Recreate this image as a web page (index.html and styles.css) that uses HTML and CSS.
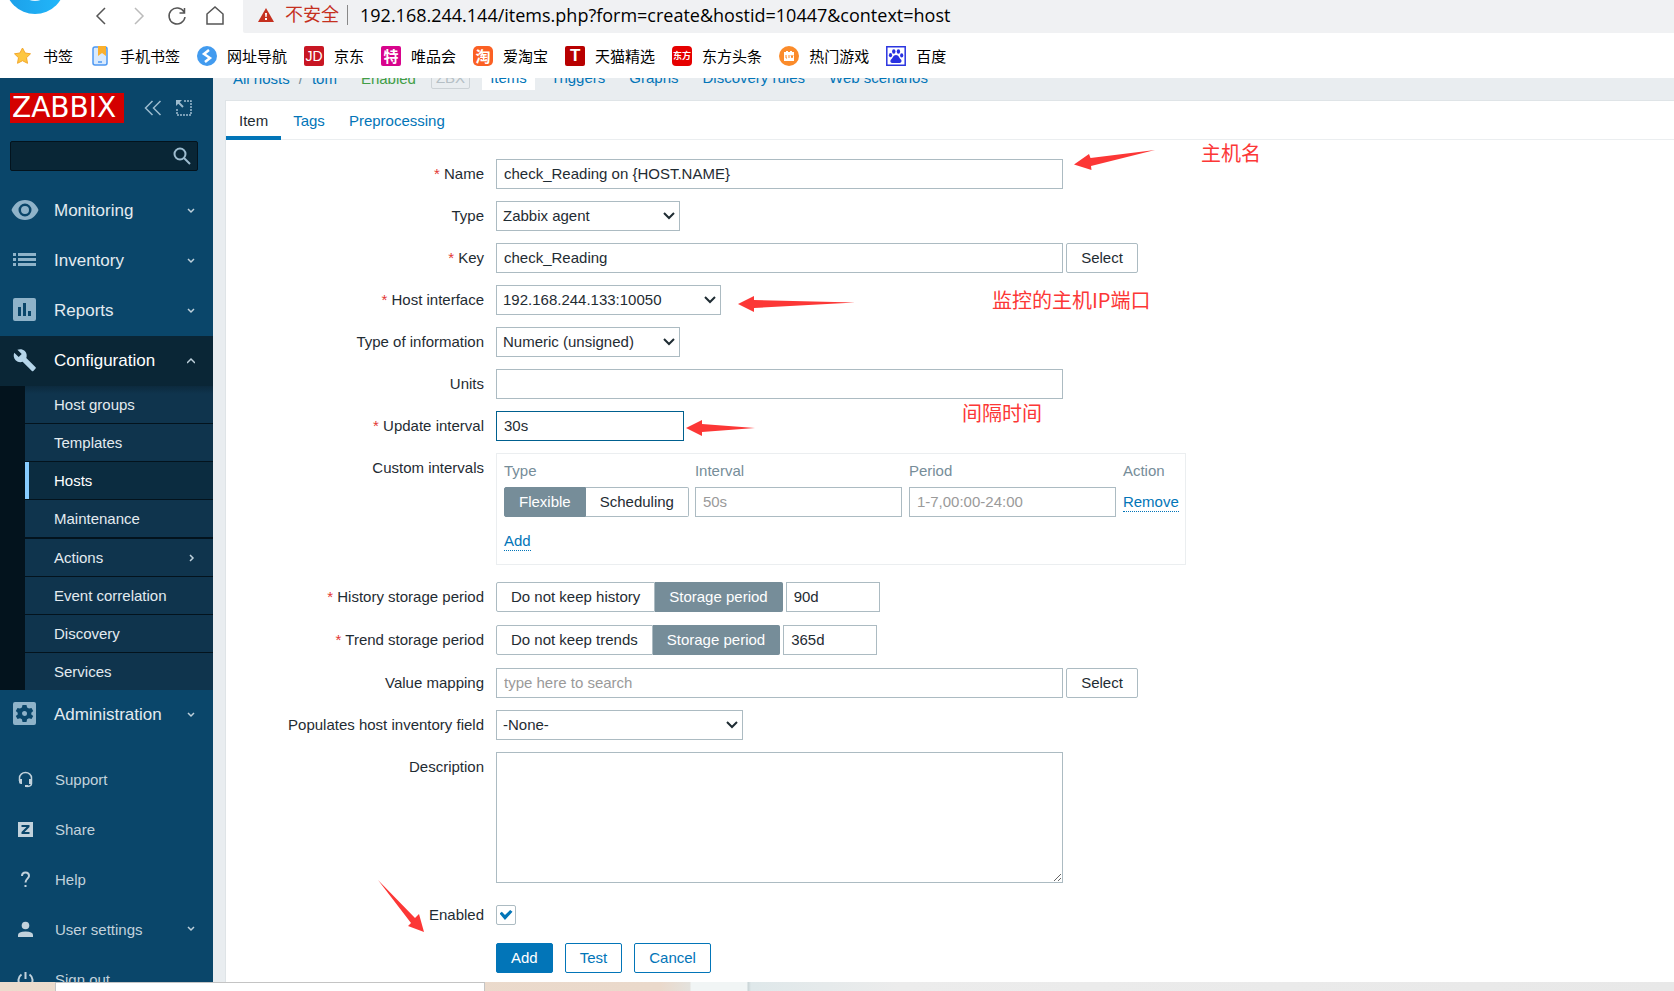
FILE: index.html
```html
<!DOCTYPE html>
<html lang="en">
<head>
    <meta charset="utf-8">
    <meta name="viewport" content="width=device-width, initial-scale=1.0">
    <link rel="stylesheet" href="styles.css">
    <title>Configuration of items</title>
</head>

<body>
    <header class="browser">
        <div class="toolbar">
            <svg class="browser-logo" width="60" height="14" viewBox="0 0 60 14">
                <defs><linearGradient id="sky" x1="0" y1="0" x2="1" y2="0"><stop offset="0" stop-color="#1c9fe8"/><stop offset="1" stop-color="#22b8fb"/></linearGradient></defs>
                <circle cx="30" cy="-16" r="30" fill="url(#sky)"/>
                <ellipse cx="30" cy="-5" rx="10" ry="6" fill="#e4f5fe"/>
            </svg>
            <nav class="nav-buttons">
                <button type="button" aria-label="Back"><svg width="20" height="20" viewBox="0 0 20 20"><path d="M14 2L6 10l8 8"/></svg></button>
                <button type="button" aria-label="Forward" class="faded"><svg width="20" height="20" viewBox="0 0 20 20"><path d="M6 2l8 8-8 8"/></svg></button>
                <button type="button" aria-label="Reload"><svg width="20" height="20" viewBox="0 0 20 20"><path d="M17 6a8 8 0 1 0 1 5M17.500 2v5h-5"/></svg></button>
                <button type="button" aria-label="Home"><svg width="20" height="20" viewBox="0 0 20 20"><path d="M2 8l8-7 8 7v10H2z"/></svg></button>
            </nav>
            <div class="address">
                <svg width="16" height="14" viewBox="0 0 16 14"><path fill="#c5301f" d="M8 0l8 14H0z"/><path fill="#fff" d="M7 5h2l-.4 4H7.400zM7 10h2v2H7z"/></svg>
                <span class="unsafe">不安全</span>
                <span class="url">192.168.244.144/items.php?form=create&amp;hostid=10447&amp;context=host</span>
            </div>
        </div>
        <nav class="bookmarks">
            <a href="#"><svg width="20" height="20" viewBox="0 0 20 20"><path fill="#fdc741" stroke="#f3a72c" stroke-linejoin="round" d="M9.500 2l2.600 5 5.400.8-4 3.900 1 5.600-5-2.600-5 2.600 1-5.600-4-3.900 5.400-.8z"/></svg>书签</a>
            <a href="#"><svg width="20" height="20" viewBox="0 0 20 20"><rect x="3" y="1" width="14" height="18" rx="2" fill="#d9eafd" stroke="#4d98f2" stroke-width="1.500"/><path fill="#fbb02d" d="M8 0h8v10l-4-3-4 3z"/><path stroke="#4d98f2" stroke-width="1.500" d="M8 16h4"/></svg>手机书签</a>
            <a href="#"><svg width="20" height="20" viewBox="0 0 20 20"><circle cx="10" cy="10" r="10" fill="#429bef"/><path fill="none" stroke="#fff" stroke-width="2.500" d="M12 4L7 8l6 4-5 4"/></svg>网址导航</a>
            <a href="#"><span class="site-icon jd">JD</span>京东</a>
            <a href="#"><span class="site-icon vip">特</span>唯品会</a>
            <a href="#"><span class="site-icon tao">淘</span>爱淘宝</a>
            <a href="#"><span class="site-icon tmall">T</span>天猫精选</a>
            <a href="#"><span class="site-icon east">东方</span>东方头条</a>
            <a href="#"><svg width="20" height="20" viewBox="0 0 20 20"><circle cx="10" cy="10" r="10" fill="#fb8b2a"/><path fill="#fff" d="M5 6h2V5h2v1h2V5h2v1h2v9H5z"/><path fill="none" stroke="#fb8b2a" d="M7 9v3h1M10 9v3M12 9l1 3 1-3"/></svg>热门游戏</a>
            <a href="#"><svg width="20" height="20" viewBox="0 0 20 20"><path fill="#fff" stroke="#2a35e0" stroke-width="1.500" d="M.8.800h18.400v18.400H.8z"/><g fill="#2932e1"><ellipse cx="7.800" cy="5.500" rx="1.700" ry="2.300"/><ellipse cx="12.400" cy="5.500" rx="1.700" ry="2.300"/><ellipse cx="4.500" cy="9.200" rx="1.600" ry="2.100"/><ellipse cx="15.700" cy="9.400" rx="1.600" ry="2.100"/><path d="M10 9c3 0 3 3 5 4.500 1.500 2-.5 4-2.500 3.500h-5C5 17.500 3.500 15.500 5 13.500 7 12 7 9 10 9z"/></g></svg>百度</a>
        </nav>
    </header>

    <div class="app">
        <aside class="sidebar">
            <div class="brand">
                <a href="#" class="logo">ZABBIX</a>
                <button type="button" aria-label="Collapse"><svg width="18" height="16" viewBox="0 0 18 16"><path d="M8.500 1l-7 7 7 7M16.500 1l-7 7 7 7"/></svg></button>
                <button type="button" aria-label="Hide sidebar"><svg width="16" height="16" viewBox="0 0 16 16"><path stroke-dasharray="2 1" d="M8 1h7v14H1V8"/><path d="M2 2l5 5" stroke-width="2"/><path d="M0 0h6L0 6z" class="solid"/></svg></button>
            </div>
            <form class="search">
                <input type="text" aria-label="Search">
                <button type="button" aria-label="Search"><svg width="18" height="18" viewBox="0 0 18 18"><circle cx="7" cy="7" r="5.500"/><path d="M11 11l6 6"/></svg></button>
            </form>

            <nav class="menu">
                <a href="#"><svg class="icon" width="28" height="24" viewBox="0 0 28 24"><path fill-rule="evenodd" d="M14 2c6.500 0 11 4 13.500 10C25 18 20.500 22 14 22S3 18 .5 12C3 6 7.500 2 14 2zm0 3.500a6.500 6.500 0 1 0 0 13 6.500 6.500 0 0 0 0-13zM14 8a4 4 0 1 1 0 8 4 4 0 0 1 0-8z"/></svg><span>Monitoring</span><svg class="chevron" width="8" height="8" viewBox="0 0 8 8"><path d="M1 2l3 3 3-3"/></svg></a>
                <a href="#"><svg class="icon" width="28" height="24" viewBox="0 0 28 24"><path d="M2 5h3v3H2zM7 5h18v3H7zM2 10h3v3H2zM7 10h18v3H7zM2 15h3v3H2zM7 15h18v3H7z"/></svg><span>Inventory</span><svg class="chevron" width="8" height="8" viewBox="0 0 8 8"><path d="M1 2l3 3 3-3"/></svg></a>
                <a href="#"><svg class="icon" width="28" height="24" viewBox="0 0 28 24"><path fill-rule="evenodd" d="M4 0h19q2 0 2 2v19q0 2-2 2H4q-2 0-2-2V2q0-2 2-2zm3 9v9h3V9zm5-4v13h3V5zm5 8v5h3v-5z"/></svg><span>Reports</span><svg class="chevron" width="8" height="8" viewBox="0 0 8 8"><path d="M1 2l3 3 3-3"/></svg></a>
                <a href="#" class="open"><svg class="icon" width="28" height="24" viewBox="0 0 28 24"><path d="M24.600 19.300l-9.300-9.200c.9-2.400.4-5.100-1.500-7C11.800 1.100 8.800.7 6.400 1.800l4.300 4.300-3 3-4.400-4.300c-1.100 2.400-.7 5.400 1.300 7.400 1.900 1.900 4.700 2.400 7 1.500l9.300 9.200c.4.400 1 .4 1.400 0l2.300-2.300c.4-.4.4-1 0-1.300z"/></svg><span>Configuration</span><svg class="chevron" width="8" height="8" viewBox="0 0 8 8"><path d="M0 6l4-4 4 4"/></svg></a>
                <ul class="submenu">
                    <li><a href="#">Host groups</a></li>
                    <li><a href="#">Templates</a></li>
                    <li><a href="#" class="selected">Hosts</a></li>
                    <li><a href="#">Maintenance</a></li>
                    <li class="has-more"><a href="#">Actions <svg class="chevron" width="8" height="8" viewBox="0 0 8 8"><path d="M3 1l3 3-3 3"/></svg></a></li>
                    <li><a href="#">Event correlation</a></li>
                    <li><a href="#">Discovery</a></li>
                    <li><a href="#">Services</a></li>
                </ul>
                <a href="#"><svg class="icon" width="28" height="24" viewBox="0 0 28 24"><path fill-rule="evenodd" d="M4 0h19q2 0 2 2v19q0 2-2 2H4q-2 0-2-2V2q0-2 2-2zm7.500 3-.6 2.600-1.900 1L6.500 6 4.800 9l1.900 1.800v1.600L4.800 14l1.700 3 2.500-.7 1.900 1 .6 2.700h4l.6-2.700 1.900-1 2.500.7 1.700-3-1.900-1.600v-1.600L22.200 9l-1.700-3-2.500.6-1.900-1L15.500 3zm2 6a2.500 2.500 0 1 1 0 5 2.500 2.500 0 0 1 0-5z"/></svg><span>Administration</span><svg class="chevron" width="8" height="8" viewBox="0 0 8 8"><path d="M1 2l3 3 3-3"/></svg></a>
            </nav>

            <nav class="user-menu">
                <a href="#"><svg class="icon" width="17" height="17" viewBox="0 0 17 17"><path fill="none" stroke="currentColor" stroke-width="1.500" d="M2.500 10V7a6 5.500 0 0 1 12 0v5.500q0 3-5 3"/><path d="M2 8h3v5H4q-2 0-2-2zM12 8h3v5h-3zM8 14h3v2H8z"/></svg><span>Support</span></a>
                <a href="#"><svg class="icon" width="17" height="17" viewBox="0 0 17 17"><path fill-rule="evenodd" d="M1 1h15v15H1zm3.500 3v2h5l-5 5v2h8v-2h-5l5-5V4z"/></svg><span>Share</span></a>
                <a href="#"><svg class="icon" width="17" height="17" viewBox="0 0 17 17"><path fill="none" stroke="currentColor" stroke-width="2" d="M5 5q0-3.500 3.500-3.500T12 5c0 2.500-3.500 3-3.500 6.500"/><path d="M7.500 14h2v2h-2z"/></svg><span>Help</span></a>
                <a href="#"><svg class="icon" width="17" height="17" viewBox="0 0 17 17"><circle cx="8.500" cy="4.500" r="3.800"/><path d="M1 16v-2q0-3.500 7.500-3.500T16 14v2z"/></svg><span>User settings</span><svg class="chevron" width="8" height="8" viewBox="0 0 8 8"><path d="M1 2l3 3 3-3"/></svg></a>
                <a href="#"><svg class="icon" width="17" height="17" viewBox="0 0 17 17"><path fill="none" stroke="currentColor" stroke-width="2" d="M4.500 3.500a7 7 0 1 0 8 0M8.500 1v7"/></svg><span>Sign out</span></a>
            </nav>
        </aside>

        <main class="page">
            <nav class="host-nav">
                <a href="#">All hosts</a><span class="slash">/</span><a href="#">tom</a>
                <span class="status-on">Enabled</span>
                <span class="zbx">ZBX</span>
                <a href="#" class="current">Items</a>
                <a href="#">Triggers</a>
                <a href="#">Graphs</a>
                <a href="#">Discovery rules</a>
                <a href="#">Web scenarios</a>
            </nav>

            <section class="panel">
                <nav class="tabs">
                    <a href="#" class="active">Item</a>
                    <a href="#">Tags</a>
                    <a href="#">Preprocessing</a>
                </nav>

                <form class="item-form">
                    <div class="row">
                        <label class="required" for="name">Name</label>
                        <div class="field">
                            <input class="wide" type="text" id="name" value="check_Reading on {HOST.NAME}">
                            <svg class="arrow arrow-name" width="90" height="24" viewBox="0 0 90 24"><path d="M4 16.500L19 6l1.500 4L85 2 21 18l.5 4z"/></svg>
                            <span class="note note-name">主机名</span>
                        </div>
                    </div>
                    <div class="row">
                        <label for="type">Type</label>
                        <div class="field"><select id="type" class="type"><option>Zabbix agent</option></select></div>
                    </div>
                    <div class="row">
                        <label class="required" for="key">Key</label>
                        <div class="field">
                            <input class="wide" type="text" id="key" value="check_Reading">
                            <button type="button" class="btn-grey">Select</button>
                        </div>
                    </div>
                    <div class="row">
                        <label class="required" for="interface">Host interface</label>
                        <div class="field">
                            <select id="interface" class="interface"><option>192.168.244.133:10050</option></select>
                            <svg class="arrow arrow-interface" width="120" height="20" viewBox="0 0 120 20"><path d="M2 10L18 2v4l101 2.500L18 14v4z"/></svg>
                            <span class="note note-interface">监控的主机IP端口</span>
                        </div>
                    </div>
                    <div class="row">
                        <label for="info">Type of information</label>
                        <div class="field"><select id="info" class="type"><option>Numeric (unsigned)</option></select></div>
                    </div>
                    <div class="row">
                        <label for="units">Units</label>
                        <div class="field"><input class="wide" type="text" id="units"></div>
                    </div>
                    <div class="row">
                        <label class="required" for="delay">Update interval</label>
                        <div class="field">
                            <input class="delay focused" type="text" id="delay" value="30s">
                            <svg class="arrow arrow-delay" width="72" height="20" viewBox="0 0 72 20"><path d="M1 10L17 2v4l53 4-53 4v4z"/></svg>
                            <span class="note note-delay">间隔时间</span>
                        </div>
                    </div>
                    <div class="row row-custom">
                        <span class="label">Custom intervals</span>
                        <div class="intervals">
                            <table>
                                <thead>
                                    <tr><th>Type</th><th>Interval</th><th>Period</th><th>Action</th></tr>
                                </thead>
                                <tbody>
                                    <tr>
                                        <td>
                                            <div class="segmented">
                                                <input type="radio" name="flex" id="flexible" checked><label for="flexible">Flexible</label>
                                                <input type="radio" name="flex" id="scheduling"><label for="scheduling">Scheduling</label>
                                            </div>
                                        </td>
                                        <td><input class="interval" type="text" placeholder="50s" aria-label="Interval"></td>
                                        <td><input class="interval" type="text" placeholder="1-7,00:00-24:00" aria-label="Period"></td>
                                        <td><button type="button" class="btn-link">Remove</button></td>
                                    </tr>
                                    <tr class="add-row"><td colspan="4"><button type="button" class="btn-link">Add</button></td></tr>
                                </tbody>
                            </table>
                        </div>
                    </div>
                    <div class="row tall">
                        <label class="required" for="history">History storage period</label>
                        <div class="field">
                            <div class="segmented">
                                <input type="radio" name="history-mode" id="history-off"><label for="history-off">Do not keep history</label>
                                <input type="radio" name="history-mode" id="history-on" checked><label for="history-on">Storage period</label>
                            </div>
                            <input class="period" type="text" id="history" value="90d">
                        </div>
                    </div>
                    <div class="row tall">
                        <label class="required" for="trends">Trend storage period</label>
                        <div class="field">
                            <div class="segmented">
                                <input type="radio" name="trends-mode" id="trends-off"><label for="trends-off">Do not keep trends</label>
                                <input type="radio" name="trends-mode" id="trends-on" checked><label for="trends-on">Storage period</label>
                            </div>
                            <input class="period" type="text" id="trends" value="365d">
                        </div>
                    </div>
                    <div class="row">
                        <label for="valuemap">Value mapping</label>
                        <div class="field">
                            <input class="wide" type="text" id="valuemap" placeholder="type here to search">
                            <button type="button" class="btn-grey">Select</button>
                        </div>
                    </div>
                    <div class="row">
                        <label for="inventory">Populates host inventory field</label>
                        <div class="field"><select id="inventory" class="inventory"><option>-None-</option></select></div>
                    </div>
                    <div class="row row-description">
                        <label for="description">Description</label>
                        <div class="field"><textarea class="wide" id="description"></textarea></div>
                    </div>
                    <div class="row tall">
                        <label for="enabled">Enabled</label>
                        <div class="field">
                            <input type="checkbox" id="enabled" checked>
                            <svg class="arrow arrow-add" width="50" height="56" viewBox="0 0 50 56"><path d="M1 1l37 38 4-4 5 18-16-6 3-3z"/></svg>
                        </div>
                    </div>
                    <div class="row">
                        <span class="label"></span>
                        <div class="actions">
                            <button type="button" class="primary">Add</button>
                            <button type="button">Test</button>
                            <button type="button">Cancel</button>
                        </div>
                    </div>
                </form>
            </section>
        </main>
    </div>

    <footer class="desktop"><div class="window-edge"></div></footer>
</body>
</html>
```

FILE: styles.css
```css
* {
    box-sizing: border-box;
}

body {
    margin: 0px;
    height: 100vh;
    display: flex;
    flex-direction: column;
    overflow: hidden;
    font-family: "Liberation Sans", "Noto Sans CJK SC", sans-serif;
    font-size: 15px;
    color: #1f2c33;
}

a {
    color: #0275b8;
    text-decoration: none;
}

button, input, select, textarea {
    font: inherit;
    color: inherit;
}

button {
    padding: 0px;
    border: 0px;
    background: none;
    cursor: pointer;
}

svg {
    display: block;
    flex: none;
}

/* browser */
.browser {
    flex: none;
    background-color: white;
    color: black;
}

.toolbar {
    display: flex;
    height: 33px;
}

.browser-logo {
    margin-left: 5px;
}

.nav-buttons {
    display: flex;
    align-items: center;
    gap: 18px;
    width: 178px;
    padding: 0px 0px 2px 26px;
}

.nav-buttons svg {
    fill: none;
    stroke: #555;
    stroke-width: 1.5;
}

.nav-buttons .faded svg {
    stroke: #bbb;
}

.address {
    flex: 1;
    display: flex;
    align-items: center;
    padding: 0px 0px 3px 15px;
    background-color: #f0f1f3;
    border-bottom-left-radius: 2px;
    font-size: 18px;
    line-height: 20px;
    white-space: nowrap;
}

.unsafe {
    margin-left: 11px;
    padding-right: 8px;
    border-right: 1px solid #888;
    color: #c5301f;
}

.url {
    margin-left: 12px;
    font-family: "Open Sans", "Noto Sans", sans-serif;
}

.bookmarks {
    display: flex;
    align-items: center;
    gap: 17px;
    height: 45px;
    padding: 1px 13px 0px;
}

.bookmarks a {
    display: flex;
    align-items: center;
    gap: 10px;
    color: black;
    font-family: "Noto Sans CJK SC", sans-serif;
    line-height: 20px;
    white-space: nowrap;
}

.site-icon {
    width: 20px;
    height: 20px;
    border-radius: 2px;
    color: white;
    font-size: 15px;
    text-align: center;
}

.jd {
    background-color: #c81623;
    font-family: "Liberation Sans", sans-serif;
    font-size: 14px;
}

.vip {
    background-color: #d8048c;
    font-weight: bold;
}

.tao {
    background-color: #fb6024;
    border-radius: 5px;
    font-weight: bold;
}

.tmall {
    background-color: #b80000;
    font-family: "Liberation Sans", sans-serif;
    font-size: 17px;
    font-weight: bold;
}

.east {
    background-color: #e60000;
    border-radius: 4px;
    font-size: 9px;
    font-weight: bold;
}

/* zabbix */
.app {
    flex: 1;
    min-height: 0px;
    display: flex;
    overflow: hidden;
    background-color: #e9edf0;
}

.sidebar {
    flex: none;
    width: 213px;
    background-color: #0a466a;
}

.brand {
    display: flex;
    align-items: center;
    padding: 15px 10px 0px;
}

.brand svg, .search svg {
    fill: none;
    stroke: #9dbccf;
    stroke-width: 1.5;
}

.brand .solid {
    fill: #9dbccf;
    stroke: none;
}

.brand button {
    margin-left: 20px;
}

.brand button + button {
    margin-left: 14px;
}

.logo {
    width: 114px;
    padding-left: 2px;
    background-color: #d40000;
    color: white;
    font-family: "DejaVu Sans", sans-serif;
    font-size: 28px;
    line-height: 30px;
}

.search {
    display: flex;
    align-items: center;
    height: 30px;
    margin: 18px 15px 15px 10px;
    padding-right: 6px;
    background-color: #092636;
    border: 1px solid #03131d;
    border-radius: 2px;
}

.search input {
    flex: 1;
    min-width: 0px;
    border: 0px;
    background: none;
    outline: none;
}

.search svg {
    stroke-width: 2;
}

.menu > a, .user-menu a {
    display: flex;
    align-items: center;
    height: 50px;
    padding: 0px 18px 0px 11px;
    color: #e3ebf0;
}

.menu > a {
    font-size: 17px;
}

.menu .icon {
    margin-right: 15px;
    margin-bottom: 3px;
    fill: #8fb3c9;
}

.menu span, .user-menu span {
    flex: 1;
}

.chevron {
    fill: none;
    stroke: #bed0db;
    stroke-width: 1.5;
}

.menu .open {
    background-color: #0a2636;
    color: white;
}

.open .icon {
    fill: #b5d5ea;
}

.submenu {
    margin: 0px;
    padding: 0px 0px 0px 25px;
    background-color: #03131d;
    list-style: none;
}

.submenu li + li {
    border-top: 1px solid #03131d;
}

.submenu li.has-more {
    border-top-width: 2px;
}

.submenu a {
    display: flex;
    align-items: center;
    justify-content: space-between;
    height: 37px;
    padding: 0px 18px 0px 29px;
    background-color: #0f344d;
    color: #e3ebf0;
}

.submenu li:first-child a {
    background-image: linear-gradient(#0c2a3e, #0f344d 8px);
}

.submenu .selected {
    padding-left: 25px;
    border-left: 4px solid #87ccff;
    background-color: #0b2c40;
    color: white;
}

.user-menu {
    padding-top: 14px;
}

.user-menu a {
    padding-left: 17px;
    color: #c2d2dc;
}

.user-menu .icon {
    margin-right: 21px;
    fill: currentColor;
}

.page {
    flex: 1;
    min-width: 0px;
    display: flex;
    flex-direction: column;
    padding-left: 12px;
}

/* scrolled half way out of view */
.host-nav {
    display: flex;
    align-items: center;
    height: 24px;
    margin: -12px 0px 10px 8px;
}

.host-nav .slash {
    margin: 0px 9px;
    color: #768d99;
}

.status-on {
    margin-left: 24px;
    color: #429e47;
}

.zbx {
    margin: 0px 12px 0px 15px;
    padding: 0px 4px;
    border: 1px solid #ccd2d6;
    border-radius: 2px;
    color: #b5bfc5;
    line-height: 20px;
}

.host-nav .zbx ~ a {
    margin-right: 8px;
    padding: 0px 8px;
    line-height: 24px;
}

.host-nav .current {
    background-color: white;
}

.panel {
    flex: 1;
    background-color: white;
    border: 1px solid #dfe4e7;
    border-width: 1px 0px 0px 1px;
}

.tabs {
    display: flex;
    height: 39px;
    border-bottom: 1px solid #ebeef0;
}

.tabs a {
    height: 39px;
    padding: 0px 12px;
    line-height: 40px;
}

.tabs .active {
    padding: 0px 13px;
    border-bottom: 4px solid #0275b8;
    color: #1f2c33;
}

.item-form {
    padding-top: 19px;
}

.row {
    display: flex;
    gap: 12px;
    min-height: 30px;
    margin-bottom: 12px;
}

.tall {
    min-height: 31px;
}

.row-custom, .row-description {
    margin-bottom: 17px;
}

.row > label, .label {
    flex: none;
    width: 258px;
    line-height: 30px;
    text-align: right;
}

.required::before {
    content: "* ";
    color: #e33734;
}

.field {
    position: relative;
    display: flex;
    align-items: flex-start;
    gap: 3px;
}

input[type="text"], select, textarea {
    height: 30px;
    padding: 0px 7px 1px;
    border: 1px solid #acbbc2;
    border-radius: 0px;
    background-color: white;
    outline: none;
}

.search input[type="text"] {
    border: 0px;
    background: none;
}

::placeholder {
    color: #9a9a9a;
}

select {
    appearance: none;
    padding: 0px 24px 1px 6px;
    background: white url("data:image/svg+xml,%3Csvg xmlns='http://www.w3.org/2000/svg' width='12' height='8'%3E%3Cpath d='M1 1l5 5 5-5' fill='none' stroke='%231f2c33' stroke-width='2'/%3E%3C/svg%3E") no-repeat right 4px center;
}

.wide {
    width: 567px;
}

.type {
    width: 184px;
}

.interface {
    width: 225px;
}

.inventory {
    width: 247px;
}

.delay {
    width: 188px;
}

input[type="text"].focused {
    border-color: #00608f;
}

.period {
    width: 94px;
}

.interval {
    width: 207px;
}

textarea.wide {
    height: 131px;
    resize: vertical;
}

.btn-grey {
    width: 72px;
    height: 30px;
    padding-bottom: 1px;
    border: 1px solid #acbbc2;
    border-radius: 2px;
}

.intervals {
    height: 112px;
    padding: 4px 6px 0px 7px;
    border: 1px solid #ebeef0;
}

.intervals table {
    border-collapse: collapse;
}

.intervals th {
    height: 24px;
    padding: 0px;
    color: #768d99;
    font-weight: normal;
    text-align: left;
}

.intervals td {
    height: 35px;
    padding: 5px 7px 0px 0px;
}

.intervals td:first-child {
    padding-right: 6px;
}

.intervals td:last-child {
    padding-right: 0px;
}

.intervals .add-row td {
    height: 47px;
    padding: 2px 0px 0px;
}

.intervals input {
    display: block;
}

.btn-link {
    border-bottom: 1px dotted #0275b8;
    color: #0275b8;
    line-height: 18px;
}

.segmented {
    display: flex;
}

.segmented input {
    position: absolute;
    opacity: 0;
    pointer-events: none;
}

.segmented label {
    height: 30px;
    padding: 0px 14px;
    border: 1px solid #acbbc2;
    border-radius: 2px 0px 0px 2px;
    line-height: 28px;
    white-space: nowrap;
}

.segmented label + input + label {
    border-left: 0px;
    border-radius: 0px 2px 2px 0px;
}

.segmented input:checked + label {
    background-color: #768d99;
    border-color: #768d99;
    color: white;
}

input[type="checkbox"] {
    appearance: none;
    display: flex;
    align-items: center;
    justify-content: center;
    width: 20px;
    height: 20px;
    margin: 5px 0px;
    border: 1px solid #acbbc2;
    border-radius: 2px;
}

input[type="checkbox"]:checked::before {
    content: "";
    width: 13px;
    height: 10px;
    background-color: #0275b8;
    clip-path: polygon(0% 35%, 18% 18%, 42% 50%, 82% 0%, 100% 18%, 42% 100%);
}

.actions {
    display: flex;
    gap: 12px;
}

.actions button {
    height: 30px;
    padding: 0px 14px 1px;
    border: 1px solid #0275b8;
    border-radius: 2px;
    color: #0275b8;
}

.actions .primary {
    background-color: #0275b8;
    color: white;
}

/* red marks drawn over the form */
.arrow, .note {
    position: absolute;
    fill: #fc3736;
    color: #fc3736;
    pointer-events: none;
}

.note {
    font-family: "Noto Sans CJK SC", sans-serif;
    font-size: 20px;
    line-height: 24px;
    white-space: nowrap;
}

.arrow-name {
    left: 574px;
    top: -11px;
}

.note-name {
    left: 705px;
    top: -18px;
}

.arrow-interface {
    left: 240px;
    top: 9px;
}

.note-interface {
    left: 496px;
    top: 3px;
}

.arrow-delay {
    left: 189px;
    top: 7px;
}

.note-delay {
    left: 466px;
    top: -10px;
}

.arrow-add {
    left: -119px;
    top: -21px;
}

/* wallpaper below the window */
.desktop {
    flex: none;
    height: 9px;
    background: linear-gradient(90deg, #ecdccd 0px, #ead9cb 660px, #e4e2dd 690px, #f1f5f5 691px, #f1f5f5 747px, #c9d4d6 748px, #dfe8ea 751px, #ececec 900px, #e8e8e8 100%);
}

.window-edge {
    width: 430px;
    height: 9px;
    margin-left: 55px;
    border: 1px solid #c4c4c4;
    border-bottom: 0px;
    background-color: white;
}
```
